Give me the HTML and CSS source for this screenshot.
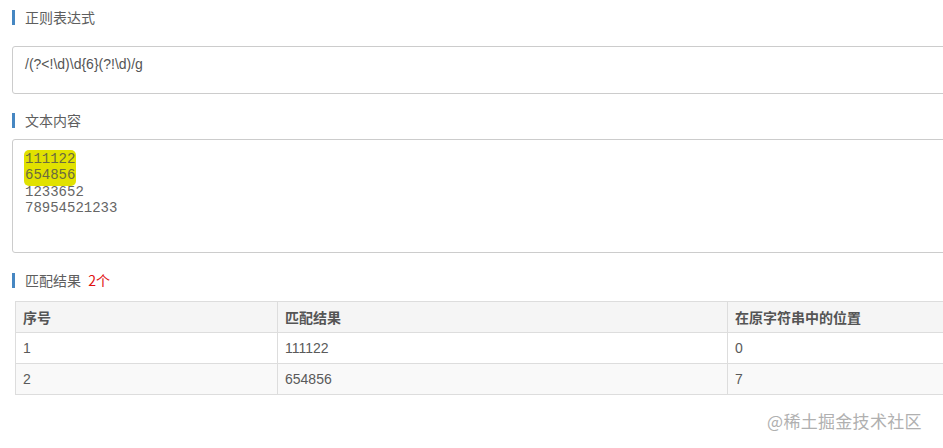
FILE: index.html
```html
<!DOCTYPE html>
<html lang="zh">
<head>
<meta charset="utf-8">
<link rel="stylesheet" href="styles.css">
</head>
<body>
<div class="page">
  <h3 class="sec-title sec-1">正则表达式</h3>
  <div class="field field-regex">/(?&lt;!\d)\d{6}(?!\d)/g</div>

  <h3 class="sec-title sec-2">文本内容</h3>
  <div class="field field-text"><span class="mark">111122
654856</span>
1233652
78954521233</div>

  <h3 class="sec-title sec-3">匹配结果 <span class="count">2个</span></h3>
  <table class="result">
    <colgroup>
      <col class="c1"><col class="c2"><col class="c3">
    </colgroup>
    <thead>
      <tr><th>序号</th><th>匹配结果</th><th>在原字符串中的位置</th></tr>
    </thead>
    <tbody>
      <tr><td>1</td><td>111122</td><td>0</td></tr>
      <tr class="alt"><td>2</td><td>654856</td><td>7</td></tr>
    </tbody>
  </table>
</div>
<div class="watermark">@稀土掘金技术社区</div>
</body>
</html>
```

FILE: styles.css
```css
html, body {
  margin: 0;
  padding: 0;
  background: #fff;
  overflow: hidden;
  height: 448px;
}
body {
  position: relative;
  font-family: "Liberation Sans", Arial, "Noto Sans CJK SC", sans-serif;
  color: #555;
}
.page {
  padding-left: 12px;
  width: 1000px;
}
.sec-title {
  margin: 0;
  height: 15px;
  line-height: 15px;
  border-left: 3px solid #4687c2;
  padding-left: 10px;
  font-family: "Noto Sans CJK SC", sans-serif;
  font-size: 14px;
  font-weight: normal;
  color: #5e5e5e;
}
.sec-1 { margin-top: 10px; }
.sec-2 { margin-top: 19px; }
.sec-3 { margin-top: 20px; }
.count {
  color: #e0100f;
  margin-left: 4px;
}
.field {
  box-sizing: border-box;
  border: 1px solid #ccc;
  border-radius: 3px;
  background: #fff;
  padding-left: 12px;
}
.field-regex {
  margin-top: 21px;
  height: 48px;
  padding-top: 9px;
  font-size: 14px;
  line-height: 16px;
  color: #555;
}
.field-text {
  margin-top: 11px;
  height: 114px;
  padding-top: 11px;
  font-family: "Liberation Mono", "Courier New", monospace;
  font-size: 14px;
  line-height: 16.4px;
  white-space: pre;
  color: #666;
}
.mark {
  display: inline-block;
  vertical-align: top;
  background: #e1e100;
  border-radius: 5px;
  color: #6a6a40;
  padding: 1px 1px 2px 1px;
  margin: -1px -1px -2px -1px;
}
.result {
  margin-top: 13px;
  margin-left: 3px;
  border-collapse: collapse;
  width: 990px;
  table-layout: fixed;
  font-size: 14px;
  color: #5a5a5a;
}
.c1 { width: 262px; }
.c2 { width: 450px; }
.result th, .result td {
  border: 1px solid #ddd;
  height: 30px;
  padding: 0 7px;
  text-align: left;
  vertical-align: middle;
}
.result th {
  background: #f5f5f5;
  font-family: "Noto Sans CJK SC", sans-serif;
  font-weight: bold;
  font-size: 14px;
  color: #555;
}
.result tr.alt td {
  background: #f9f9f9;
}
.watermark {
  position: absolute;
  left: 767px;
  top: 409px;
  font-family: "Noto Sans CJK SC", sans-serif;
  font-size: 17px;
  line-height: 24px;
  color: #b0b0b0;
  letter-spacing: 0.3px;
}
```
